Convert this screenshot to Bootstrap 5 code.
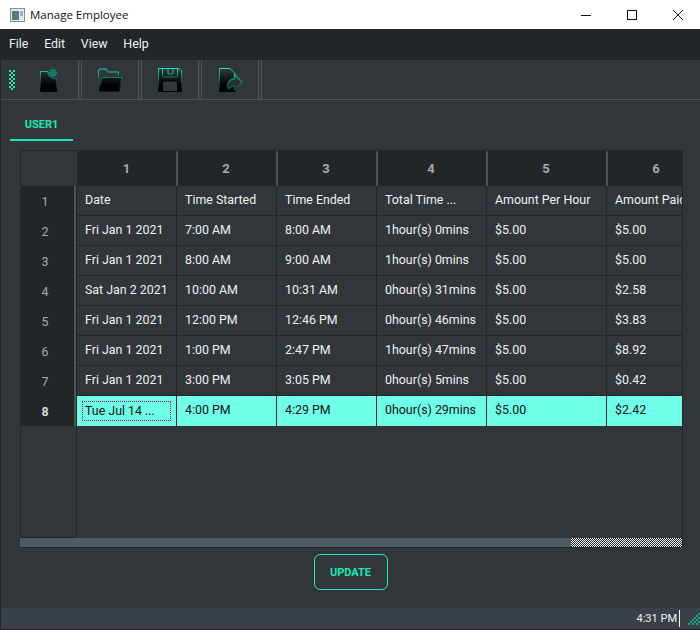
<!DOCTYPE html>
<html lang="en">
<head>
    <meta charset="UTF-8">
    <meta name="viewport" content="width=device-width, initial-scale=1.0">
    <title>Manage Employee</title>
    <link rel="stylesheet" href="https://cdn.jsdelivr.net/npm/bootstrap@5.3.0/dist/css/bootstrap.min.css">
    <style>
        html, body { height: 100%; overflow: hidden; }
        body { background: #31363b; font-family: Roboto, sans-serif; font-size: 12.4px; color: #eff0f1; }
        .app-window { width: 700px; height: 630px; }
        .title-bar { height: 29px; background: #fff; color: #111; padding-left: 10px; font-family: "Open Sans", sans-serif; font-size: 11.5px; }
        .title-text { margin-left: 5px; }
        .win-btns { margin-right: -1px; }
        .win-btn { width: 46px; height: 29px; }
        .app-body { border-left: 1px solid #232629; border-bottom: 1px solid #232629; min-height: 0; }
        .menu-bar { height: 31px; background: #232629; padding-left: 8px; }
        .menu-item { margin-right: 15.7px; }
        .tool-bar { height: 40px; border-bottom: 1px solid #4d5359; }
        .tool-grip { width: 21px; padding-left: 8px; }
        .tool-btn { width: 60px; height: 39px; padding-right: 4px; border-right: 1px solid #4d5359; position: relative; }
        .tool-btn::after { content: ""; position: absolute; right: 1px; top: 0; bottom: 0; width: 1px; background: #3a4047; }
        .tool-btn::before { content: ""; position: absolute; right: 2px; top: 0; bottom: 0; width: 1px; background: #4d5359; }
        .tab-strip { height: 50px; padding-left: 9px; }
        .tab-item { width: 63px; height: 41px; border-bottom: 2px solid #1de9b6; color: #1de9b6; font-weight: 700; font-size: 11px; padding-top: 11px; }
        .grid-box { width: 663px; height: 398px; margin-left: 19px; border-right: 1px solid #232629; border-bottom: 1px solid #232629; }
        .grid-view { height: 388px; overflow: hidden; border-top-right-radius: 4px; }
        .emp-table { table-layout: fixed; width: 687px; border-collapse: separate; border-spacing: 0; --bs-table-bg: transparent; --bs-table-color: #eff0f1; }
        .emp-table th, .emp-table td { padding: 0 0 0 8px; vertical-align: middle; height: 30px; font-weight: 400; border: 0; white-space: nowrap; overflow: hidden; }
        .emp-table td { padding-bottom: 1px; border-right: 1px solid #232629; border-bottom: 1px solid #232629; }
        .emp-table tr.title-row td { padding-bottom: 0; }
        .corner-cell { width: 57px; height: 36px !important; border-top: 1px solid #232629 !important; border-left: 1px solid #232629 !important; }
        .emp-table thead th.col-head { height: 36px; background: #232629; color: #a6abb0; font-size: 13px; font-weight: 700; text-align: center; padding: 0 2px 1px 0; border-right: 1px solid #4d5359; border-left: 1px solid #4d5359; border-top: 2px solid #232629; }
        .emp-table thead th.head-first { padding-right: 0; border-left: 0; border-top-left-radius: 4px; }
        .emp-table tbody th.row-head { background: #232629; color: #a6abb0; text-align: center; padding: 2px 6px 0 0; border-right: 1px solid #232629; box-shadow: inset -2px 0 0 #4d5359; }
        .emp-table tbody th.row-head-first { border-top-left-radius: 4px; }
        .emp-table tbody th.row-head-on { font-weight: 700; color: #d5d8da; }
        .emp-table tbody tr.row-on td { background: #6fffe9; color: #111; border-bottom: 0; height: 30px; }
        .edit-box { display: block; width: 89px; height: 20px; margin-left: -3px; padding-left: 2px; line-height: 18px; border: 1px dotted #b0102c; border-radius: 1px; }
        .emp-table tbody th.filler-head { height: 112px; padding: 0; border: 1px solid #232629; border-top: 0; border-radius: 0 0 4px 4px; box-shadow: none; }
        .emp-table tbody td.filler-cell { height: 112px; border: 0; }
        .scroll-track { height: 9px; }
        .scroll-thumb { width: 551px; background: #4f5b62; }
        .scroll-rest { background: repeating-conic-gradient(#fff 0 25%, #232629 0 50%) 0 0 / 2px 2px; }
        .update-row { margin-top: 6px; height: 37px; }
        .update-btn { --bs-btn-color: #1de9b6; --bs-btn-border-color: #1de9b6; --bs-btn-hover-color: #1de9b6; --bs-btn-hover-bg: transparent; --bs-btn-hover-border-color: #1de9b6; width: 74px; height: 36px; padding: 2px 0 0; font-size: 11px; font-weight: 700; }
        .status-bar { height: 21px; background: #3a4047; margin-top: auto; font-size: 11px; }
        .status-time { padding-right: 2px; border-right: 1px solid #eff0f1; line-height: 17px; margin-right: 8px; }
    </style>
</head>
<body>
    <div class="app-window d-flex flex-column">
        <div class="title-bar d-flex align-items-center">
            <svg width="15" height="14" viewBox="0 0 15 14">
                <rect x="0.5" y="0.5" width="14" height="13" fill="#e8e8e8" stroke="#8a8f94"/>
                <rect x="2" y="3" width="7" height="9" fill="#4f7f7c"/>
                <rect x="10" y="3" width="3" height="5" fill="#9fb4c4"/>
            </svg>
            <span class="title-text flex-grow-1">Manage Employee</span>
            <div class="win-btns d-flex">
                <div class="win-btn d-flex align-items-center justify-content-center">
                    <svg width="10" height="10" viewBox="0 0 10 10"><path d="M0 5.5H10" stroke="#111"/></svg>
                </div>
                <div class="win-btn d-flex align-items-center justify-content-center">
                    <svg width="10" height="10" viewBox="0 0 10 10"><rect x="0.5" y="0.5" width="9" height="9" fill="none" stroke="#111"/></svg>
                </div>
                <div class="win-btn d-flex align-items-center justify-content-center">
                    <svg width="10" height="10" viewBox="0 0 10 10"><path d="M0 0L10 10M10 0L0 10" stroke="#111" stroke-width="1"/></svg>
                </div>
            </div>
        </div>

        <div class="app-body d-flex flex-column flex-grow-1">
            <div class="menu-bar d-flex align-items-center">
                <span class="menu-item">File</span>
                <span class="menu-item">Edit</span>
                <span class="menu-item">View</span>
                <span class="menu-item">Help</span>
            </div>

            <div class="tool-bar d-flex">
                <div class="tool-grip d-flex align-items-center">
                    <svg width="6" height="20" viewBox="0 0 6 20" fill="#1de9b6">
                        <path d="M0 0h2v2H0zM4 0h2v2H4zM2 2h2v2H2zM0 4h2v2H0zM4 4h2v2H4zM2 6h2v2H2zM0 8h2v2H0zM4 8h2v2H4zM2 10h2v2H2zM0 12h2v2H0zM4 12h2v2H4zM2 14h2v2H2zM0 16h2v2H0zM4 16h2v2H4zM2 18h2v2H2z"/>
                    </svg>
                </div>
                <div class="tool-btn d-flex align-items-center justify-content-center">
                    <svg width="26" height="26" viewBox="0 0 26 26">
                        <defs>
                            <linearGradient id="edgeFade" gradientUnits="userSpaceOnUse" x1="0" y1="1" x2="0" y2="24">
                                <stop offset="0" stop-color="#1de9b6"/>
                                <stop offset="0.55" stop-color="#0b5a48"/>
                                <stop offset="1" stop-color="#000"/>
                            </linearGradient>
                            <linearGradient id="arrowFade" gradientUnits="userSpaceOnUse" x1="0" y1="6" x2="0" y2="24">
                                <stop offset="0" stop-color="#17b893"/>
                                <stop offset="1" stop-color="#0b3a30"/>
                            </linearGradient>
                            <linearGradient id="bodyFade" gradientUnits="userSpaceOnUse" x1="0" y1="2" x2="0" y2="24">
                                <stop offset="0" stop-color="#31363b"/>
                                <stop offset="0.75" stop-color="#000"/>
                                <stop offset="1" stop-color="#000"/>
                            </linearGradient>
                        </defs>
                        <path d="M3.5 4.5H11C11 9 14 12 19.5 12V24.5H3.5Z" fill="url(#bodyFade)" stroke="url(#edgeFade)"/>
                        <path d="M16 1.5V10M11.8 5.8H20.2M13 2.8L19 8.8M19 2.8L13 8.8" stroke="#14a988" stroke-width="1.2"/>
                        <circle cx="16" cy="5.8" r="2.4" fill="#0f7a62"/>
                    </svg>
                </div>
                <div class="tool-btn d-flex align-items-center justify-content-center">
                    <svg width="26" height="26" viewBox="0 0 26 26">
                        <path d="M1.5 11V4Q1.5 2 3.5 2H9L11 5H21.5V8" fill="none" stroke="url(#edgeFade)"/>
                        <path d="M5 10.5H25L22 24H2Z" fill="url(#bodyFade)" stroke="url(#edgeFade)"/>
                    </svg>
                </div>
                <div class="tool-btn d-flex align-items-center justify-content-center">
                    <svg width="26" height="26" viewBox="0 0 26 26">
                        <path d="M1.5 1.5H22L24.5 4V24.5H1.5Z" fill="url(#bodyFade)" stroke="url(#edgeFade)"/>
                        <path d="M5.5 2V8.5Q5.5 10 7 10H19Q20.5 10 20.5 8.5V2M11 2V7H16V2" fill="none" stroke="url(#edgeFade)"/>
                        <path d="M5.5 24V14H20.5V24" fill="#31363b" stroke="#000"/>
                    </svg>
                </div>
                <div class="tool-btn d-flex align-items-center justify-content-center">
                    <svg width="26" height="26" viewBox="0 0 26 26">
                        <path d="M2.5 1.5H13L18.5 7V24.5H2.5Z" fill="url(#bodyFade)" stroke="url(#edgeFade)"/>
                        <path d="M17.5 7.5L25 15.5L17.5 23V19C14.5 19 13 20.5 11.5 22C9 17.5 12 12 17.5 12Z" fill="#2a2e32" stroke="url(#arrowFade)" stroke-width="1.4"/>
                    </svg>
                </div>
            </div>

            <div class="tab-strip">
                <div class="tab-item d-flex align-items-center justify-content-center">USER1</div>
            </div>

            <div class="grid-box">
                <div class="grid-view">
                    <table class="table emp-table mb-0">
                        <colgroup>
                            <col style="width: 57px">
                            <col style="width: 100px">
                            <col style="width: 100px">
                            <col style="width: 100px">
                            <col style="width: 110px">
                            <col style="width: 120px">
                            <col style="width: 100px">
                        </colgroup>
                        <thead>
                            <tr>
                                <th class="corner-cell"></th>
                                <th class="col-head head-first">1</th>
                                <th class="col-head">2</th>
                                <th class="col-head">3</th>
                                <th class="col-head">4</th>
                                <th class="col-head">5</th>
                                <th class="col-head">6</th>
                            </tr>
                        </thead>
                        <tbody>
                            <tr class="title-row">
                                <th class="row-head row-head-first">1</th>
                                <td>Date</td><td>Time Started</td><td>Time Ended</td><td>Total Time ...</td><td>Amount Per Hour</td><td>Amount Paid</td>
                            </tr>
                            <tr>
                                <th class="row-head">2</th>
                                <td>Fri Jan 1 2021</td><td>7:00 AM</td><td>8:00 AM</td><td>1hour(s) 0mins</td><td>$5.00</td><td>$5.00</td>
                            </tr>
                            <tr>
                                <th class="row-head">3</th>
                                <td>Fri Jan 1 2021</td><td>8:00 AM</td><td>9:00 AM</td><td>1hour(s) 0mins</td><td>$5.00</td><td>$5.00</td>
                            </tr>
                            <tr>
                                <th class="row-head">4</th>
                                <td>Sat Jan 2 2021</td><td>10:00 AM</td><td>10:31 AM</td><td>0hour(s) 31mins</td><td>$5.00</td><td>$2.58</td>
                            </tr>
                            <tr>
                                <th class="row-head">5</th>
                                <td>Fri Jan 1 2021</td><td>12:00 PM</td><td>12:46 PM</td><td>0hour(s) 46mins</td><td>$5.00</td><td>$3.83</td>
                            </tr>
                            <tr>
                                <th class="row-head">6</th>
                                <td>Fri Jan 1 2021</td><td>1:00 PM</td><td>2:47 PM</td><td>1hour(s) 47mins</td><td>$5.00</td><td>$8.92</td>
                            </tr>
                            <tr>
                                <th class="row-head">7</th>
                                <td>Fri Jan 1 2021</td><td>3:00 PM</td><td>3:05 PM</td><td>0hour(s) 5mins</td><td>$5.00</td><td>$0.42</td>
                            </tr>
                            <tr class="row-on">
                                <th class="row-head row-head-on">8</th>
                                <td><span class="edit-box">Tue Jul 14 ...</span></td><td>4:00 PM</td><td>4:29 PM</td><td>0hour(s) 29mins</td><td>$5.00</td><td>$2.42</td>
                            </tr>
                            <tr>
                                <th class="filler-head"></th>
                                <td class="filler-cell" colspan="6"></td>
                            </tr>
                        </tbody>
                    </table>
                </div>
                <div class="scroll-track d-flex">
                    <div class="scroll-thumb"></div>
                    <div class="scroll-rest flex-grow-1"></div>
                </div>
            </div>

            <div class="update-row d-flex justify-content-center">
                <button type="button" class="btn update-btn">UPDATE</button>
            </div>

            <div class="status-bar d-flex align-items-center justify-content-end">
                <span class="status-time">4:31 PM</span>
                <svg width="12" height="12" viewBox="0 0 12 12" fill="#17a589">
                    <path d="M10 0h2v2h-2zM8 2h2v2H8zM6 4h2v2H6zM10 4h2v2h-2zM4 6h2v2H4zM8 6h2v2H8zM2 8h2v2H2zM6 8h2v2H6zM10 8h2v2h-2zM0 10h2v2H0zM4 10h2v2H4zM8 10h2v2H8z"/>
                </svg>
            </div>
        </div>
    </div>

    <script src="https://cdn.jsdelivr.net/npm/bootstrap@5.3.0/dist/js/bootstrap.bundle.min.js"></script>
</body>
</html>
